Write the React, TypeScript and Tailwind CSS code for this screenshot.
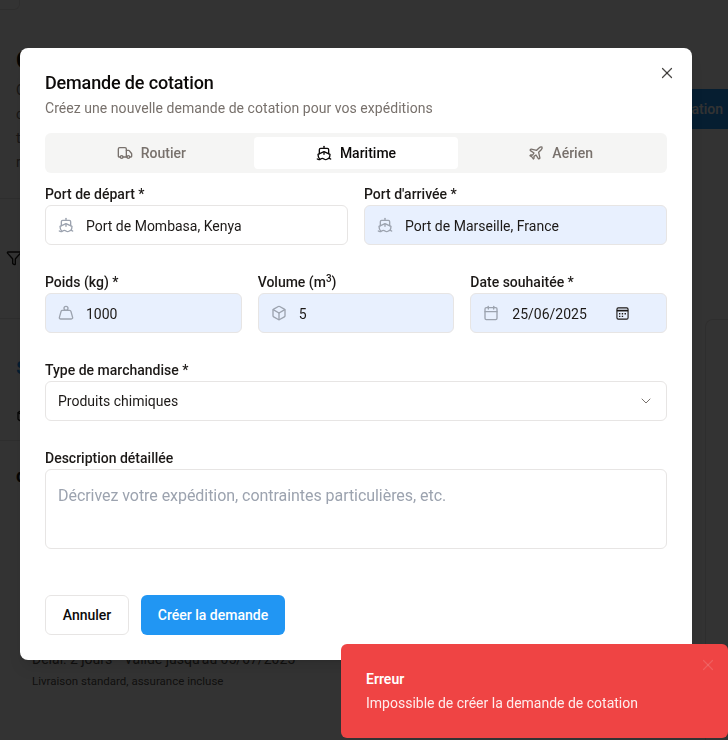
import { Box, Calendar, ChevronDown, Filter, Plane, Ship, Truck, Weight, X } from 'lucide-react';
import type { ReactNode } from 'react';

function NativeCalendar() {
  return (
    <svg width="13" height="13" viewBox="0 0 14 14" className="block text-[#1c1917]">
      <path d="M2.5 1h9A1.5 1.5 0 0 1 13 2.5v9a1.5 1.5 0 0 1-1.5 1.5h-9A1.5 1.5 0 0 1 1 11.500v-9A1.500 1.500 0 0 1 2.500 1Z" fill="none" stroke="currentColor" strokeWidth="1.200" />
      <path d="M1 3h12v1.800H1z" fill="currentColor" />
      <path d="M3.200 6.500h1.500V8H3.200zM6.200 6.500h1.500V8H6.200zM9.200 6.500h1.500V8H9.200zM3.200 9.300h1.500v1.500H3.200zM6.200 9.300h1.500v1.500H6.200z" fill="currentColor" />
    </svg>
  );
}

function Field({ label, children }: { label: ReactNode; children: ReactNode }) {
  return (
    <div className="flex flex-col gap-px">
      <label className="text-sm font-medium leading-5 text-[#1c1917]">{label}</label>
      {children}
    </div>
  );
}

function IconInput({ icon, value, filled }: { icon: ReactNode; value: string; filled?: boolean }) {
  return (
    <div className={`flex h-10 items-center gap-3 rounded-md border border-[#e7e5e4] pl-3 text-sm text-[#1c1917] ${filled ? 'bg-[#e8f0fe]' : 'bg-white'}`}>
      <span className="text-[#9ca3af]">{icon}</span>
      <span className="pt-[2px]">{value}</span>
    </div>
  );
}

function BackgroundPage() {
  return (
    <div className="flex h-full bg-white text-[#1c1917]">
      <div className="w-[692px] shrink-0">
        <div className="h-[10px] w-5 rounded-br-md border-b border-r border-[#e7e5e4]" />
        <div className="mt-[38px] pl-4">
          <h1 className="text-2xl font-bold leading-6">Cotations</h1>
          <div className="mt-[6px] text-sm leading-6 text-[#78716c]">
            <p>Consultez</p>
            <p>cotations</p>
            <p>transport</p>
            <p>reçues</p>
          </div>
        </div>
        <div className="mt-6 border-t border-[#e7e5e4] pl-[6px] pt-[51px]">
          <Filter size={16} />
        </div>
        <div className="mt-[52px] border-t border-[#e7e5e4] pl-4 pt-[37px]">
          <div className="text-lg font-bold leading-6 text-[#2196f3]">$</div>
          <Box size={16} className="mt-7" />
        </div>
        <div className="mt-4 border-t border-[#e7e5e4] pl-4 pt-[23px]">
          <div className="text-lg font-bold leading-6">d</div>
        </div>
        <div className="mt-[161px] pl-[32px]">
          <p className="text-sm leading-5 text-[#57534e]">Délai: 2 jours  •  Valide jusqu'au 05/07/2025</p>
          <p className="mt-[2px] text-[11.5px] leading-5 text-[#57534e]">Livraison standard, assurance incluse</p>
        </div>
      </div>
      <div className="flex min-w-0 flex-1 flex-col">
        <div className="mt-[89px] flex h-10 items-center justify-end whitespace-nowrap bg-[#2196f3] pr-[5px] text-sm font-medium text-white">
          ation
        </div>
        <div className="ml-[13px] mt-[190px] flex-1 rounded-tl-lg border-l border-t border-[#e7e5e4]" />
      </div>
    </div>
  );
}

export default function App() {
  return (
    <div className="relative h-[740px] w-[728px] overflow-hidden font-['Roboto',sans-serif]">
      <BackgroundPage />
      <div className="absolute inset-0 bg-black/80 backdrop-blur-[0.5px]" />

      {/* Modal */}
      <div className="absolute left-5 top-12 h-[612px] w-[672px] rounded-lg bg-white px-[25px] pt-[25px] shadow-lg">
        <button className="absolute right-4 top-4 text-[#1c1917]/80">
          <X size={18} strokeWidth={1.6} className="block" />
        </button>
        <h2 className="text-lg font-medium leading-5 tracking-[-0.15px] text-[#0c0a09]">Demande de cotation</h2>
        <p className="mt-[5px] text-sm leading-5 tracking-[0.05px] text-[#78716c]">Créez une nouvelle demande de cotation pour vos expéditions</p>

        <div className="mt-[15px] grid h-10 grid-cols-3 items-center rounded-md bg-[#f5f5f4] px-1 text-sm font-medium text-[#78716c]">
          <div className="flex h-8 items-center justify-center gap-2">
            <Truck size={16} />
            Routier
          </div>
          <div className="flex h-8 items-center justify-center gap-2 rounded-sm bg-white text-[#0c0a09]">
            <Ship size={16} />
            Maritime
          </div>
          <div className="flex h-8 items-center justify-center gap-2">
            <Plane size={16} />
            Aérien
          </div>
        </div>

        <div className="mt-[11px] grid grid-cols-2 gap-4">
          <Field label="Port de départ *">
            <IconInput icon={<Ship size={16} className="block" />} value="Port de Mombasa, Kenya" />
          </Field>
          <Field label="Port d'arrivée *">
            <IconInput icon={<Ship size={16} className="block" />} value="Port de Marseille, France" filled />
          </Field>
        </div>

        <div className="mt-[27px] grid grid-cols-3 gap-4">
          <Field label="Poids (kg) *">
            <IconInput icon={<Weight size={16} className="block" />} value="1000" filled />
          </Field>
          <Field label={<>Volume (m<sup className="text-[10px]">3</sup>)</>}>
            <IconInput icon={<Box size={16} className="block" />} value="5" filled />
          </Field>
          <Field label="Date souhaitée *">
            <div className="flex h-10 items-center rounded-md border border-[#e7e5e4] bg-[#e8f0fe] pl-3 text-sm text-[#1c1917]">
              <Calendar size={16} className="text-[#9ca3af]" />
              <span className="ml-[13px] pt-[2px]">25/06/2025</span>
              <span className="ml-[29px]"><NativeCalendar /></span>
            </div>
          </Field>
        </div>

        <div className="mt-[27px]">
          <Field label="Type de marchandise *">
            <div className="flex h-10 items-center justify-between rounded-md border border-[#e7e5e4] bg-white pl-3 pr-3 text-sm text-[#1c1917]">
              Produits chimiques
              <ChevronDown size={16} strokeWidth={1.5} className="text-[#78716c]" />
            </div>
          </Field>
        </div>

        <div className="mt-[27px]">
          <Field label="Description détaillée">
            <textarea
              readOnly
              placeholder="Décrivez votre expédition, contraintes particulières, etc."
              className="block h-20 w-full resize-none rounded-md border border-[#e7e5e4] bg-white px-3 py-4 text-base leading-5 tracking-[-0.05px] placeholder:text-[#9ca3af]"
            />
          </Field>
        </div>

        <div className="mt-[46px] flex gap-3">
          <button className="h-10 w-[84px] rounded-md border border-[#e7e5e4] bg-white text-sm font-medium text-[#0c0a09]">Annuler</button>
          <button className="h-10 w-[144px] rounded-md bg-[#2196f3] text-sm font-medium text-white">Créer la demande</button>
        </div>
      </div>

      {/* Toast */}
      <div className="absolute left-[341px] top-[644px] h-[94px] w-[387px] rounded-md bg-[#ef4444] pl-[25px] pt-[25px] text-white">
        <X size={18} strokeWidth={1.6} className="absolute right-[11px] top-3 text-[#fafaf9]/15" />
        <div className="text-sm font-semibold leading-5">Erreur</div>
        <div className="mt-1 text-sm leading-5 opacity-90">Impossible de créer la demande de cotation</div>
      </div>
    </div>
  );
}
